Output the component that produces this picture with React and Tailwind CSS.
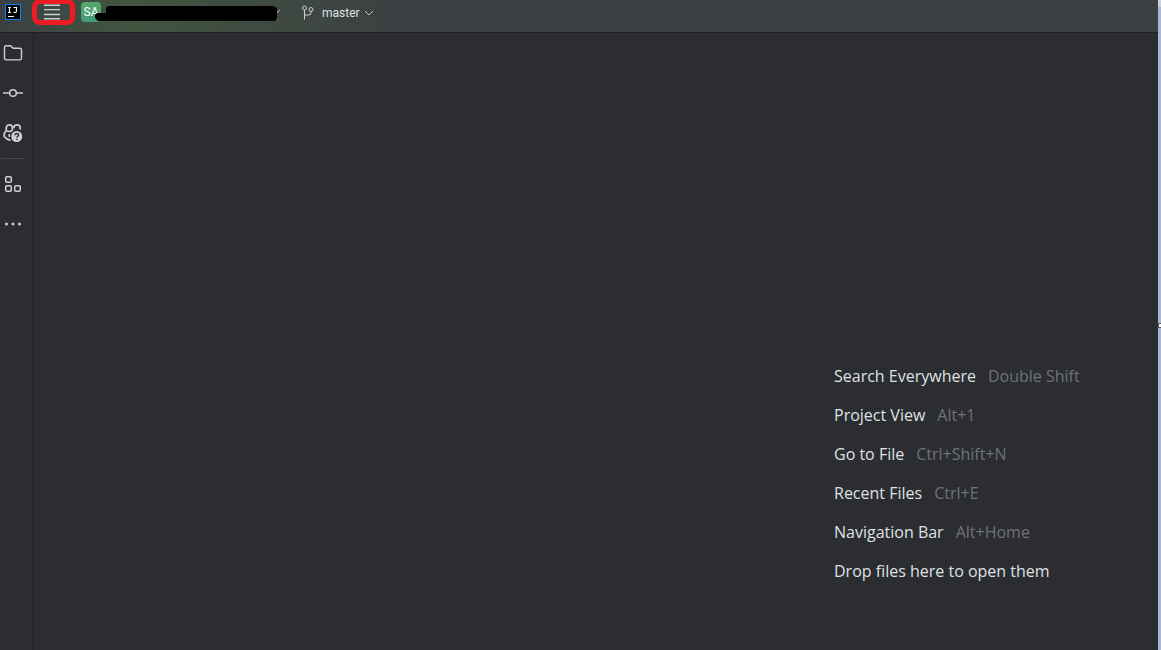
const hints = [
  { label: 'Search Everywhere', keys: 'Double Shift' },
  { label: 'Project View', keys: 'Alt+1' },
  { label: 'Go to File', keys: 'Ctrl+Shift+N' },
  { label: 'Recent Files', keys: 'Ctrl+E' },
  { label: 'Navigation Bar', keys: 'Alt+Home' },
  { label: 'Drop files here to open them' },
]

function Logo() {
  return (
    <svg width="16" height="16" viewBox="0 0 16 16" fill="none" aria-hidden="true">
      <rect x="0.5" y="0.5" width="15" height="15" fill="#000" stroke="#087cfa" />
      <path d="M3 3.5h3M4.5 3.5v5M3 8.5h3M8.5 3.5h3v3.5q0 1.5-1.5 1.5h-1.5" stroke="#fff" strokeWidth="1.2" />
      <path d="M3 12.5h6" stroke="#fff" />
    </svg>
  )
}

function MenuIcon() {
  return (
    <svg width="16" height="16" viewBox="0 0 16 16" stroke="#ced0d6" strokeWidth="1.4" aria-hidden="true">
      <path d="M0 1.3h16M0 5.6h16M0 10.5h16M0 14.8h16" />
    </svg>
  )
}

function BranchIcon() {
  return (
    <svg width="14" height="16" viewBox="0 0 14 16" fill="none" stroke="#ced0d6" aria-hidden="true">
      <circle cx="3.5" cy="3" r="2" />
      <circle cx="10" cy="4.5" r="2" />
      <path d="M3.5 5v9.5M10 6.5v1q0 2.5-2.5 2.5h-4" />
    </svg>
  )
}

function Chevron() {
  return (
    <svg width="10" height="6" viewBox="0 0 10 6" fill="none" stroke="#b4b8bf" aria-hidden="true">
      <path d="M1 1l4 4 4-4" />
    </svg>
  )
}

function FolderIcon() {
  return (
    <svg width="20" height="20" viewBox="0 0 20 20" fill="none" stroke="#ced0d6" strokeWidth="1.4" aria-hidden="true">
      <path d="M1.5 4.5a1.8 1.8 0 0 1 1.8-1.8h4.2l2.7 2.6h6.5a1.8 1.8 0 0 1 1.8 1.8v8a1.8 1.8 0 0 1-1.8 1.8h-13.4a1.8 1.8 0 0 1-1.8-1.8z" />
    </svg>
  )
}

function CommitIcon() {
  return (
    <svg width="20" height="20" viewBox="0 0 20 20" fill="none" stroke="#ced0d6" strokeWidth="1.5" aria-hidden="true">
      <circle cx="10" cy="10" r="3.3" />
      <path d="M0 10h6.7M13.3 10h6.7" />
    </svg>
  )
}

function CopilotIcon() {
  return (
    <svg width="20" height="20" viewBox="0 0 20 20" fill="none" stroke="#ced0d6" strokeWidth="1.7" aria-hidden="true">
      <path d="M3.3 7.5C2.8 3.5 4 1.9 6.3 1.9c2.400 0 3.200 1 3.200 3.100S8.500 8.500 6.300 8.500 3.300 7.500 3.300 7.500zM17.200 6.500C17.500 3.200 16.600 1.900 14.200 1.900c-2.400 0-3.400 1-3.400 3.300" />
      <path d="M3 8C1.700 8.900 1.200 9.900 1.200 11.500v2C2.800 15.600 4.800 16.900 7.600 17.300M6.300 11v3" />
      <circle cx="13.7" cy="13.5" r="6.6" fill="#2b2d30" stroke="none" />
      <circle cx="13.7" cy="13.5" r="5.5" fill="#ced0d6" stroke="none" />
      <path d="M12 12.2c0-2.300 3.600-2.200 3.600-.1 0 1.300-1.800 1.200-1.800 2.500M13.800 15.700v1.400" stroke="#2b2d30" strokeWidth="1.4" />
    </svg>
  )
}

function StructureIcon() {
  return (
    <svg width="20" height="20" viewBox="0 0 20 20" fill="none" stroke="#ced0d6" strokeWidth="1.5" aria-hidden="true">
      <rect x="2.7" y="2.7" width="5.6" height="5.6" rx="1.2" />
      <rect x="2.7" y="11.7" width="5.6" height="5.6" rx="1.2" />
      <rect x="11.7" y="11.7" width="5.6" height="5.6" rx="1.2" />
    </svg>
  )
}

function MoreIcon() {
  return (
    <svg width="20" height="20" viewBox="0 0 20 20" fill="#ced0d6" aria-hidden="true">
      <circle cx="3.5" cy="10" r="1.5" />
      <circle cx="10" cy="10" r="1.5" />
      <circle cx="16.5" cy="10" r="1.5" />
    </svg>
  )
}

function ToolButton({ label, children }) {
  return (
    <button type="button" aria-label={label} className="flex h-10 w-[26px] items-center justify-center">
      {children}
    </button>
  )
}

function Header() {
  return (
    <header className="flex h-[33px] items-start border-b border-[#1e1f22] bg-[linear-gradient(90deg,#3c4042_0px,#415540_130px,#3c4042_390px)]">
      <div className="flex h-6 items-center pl-[5px]">
        <Logo />
        <button
          type="button"
          aria-label="Main menu"
          className="ml-[11px] flex h-[26px] w-[43px] items-center justify-center rounded-lg border-[5px] border-[#ed1c24] pr-1"
        >
          <MenuIcon />
        </button>
        <button type="button" aria-label="Project" className="relative ml-[6px] flex h-6 w-[200px] items-center justify-between">
          <span className="flex size-5 items-center justify-center rounded bg-linear-to-b from-[#58a869] to-[#3f9b7c] font-['Roboto',sans-serif] text-xs text-white">
            SA
          </span>
          <Chevron />
          <svg className="absolute top-1.5 left-3.5" width="183" height="16" viewBox="0 0 183 16" aria-hidden="true">
            <path d="M13 0h165l4 2v10l-2 3H3l-3-3V9l2-2h9V2z" fill="#000" />
          </svg>
        </button>
        <button
          type="button"
          className="ml-5 flex h-6 items-center pt-0.5 font-['Roboto',sans-serif] text-xs text-[#dfe1e5]"
        >
          <BranchIcon />
          <span className="mr-1 ml-[7px]">master</span>
          <Chevron />
        </button>
      </div>
    </header>
  )
}

function Sidebar() {
  return (
    <nav className="flex w-[34px] shrink-0 flex-col items-start border-r border-[#1e1f22]">
      <ToolButton label="Project">
        <FolderIcon />
      </ToolButton>
      <ToolButton label="Commit">
        <CommitIcon />
      </ToolButton>
      <ToolButton label="Copilot">
        <CopilotIcon />
      </ToolButton>
      <div className="my-[5px] ml-px h-px w-6 bg-[#43454a]" />
      <ToolButton label="Structure">
        <StructureIcon />
      </ToolButton>
      <ToolButton label="More tool windows">
        <MoreIcon />
      </ToolButton>
    </nav>
  )
}

export default function App() {
  return (
    <div className="flex min-h-screen bg-[#2b2d30]">
      <div className="flex grow flex-col">
        <Header />
        <div className="flex grow">
          <Sidebar />
          <main className="flex grow items-end justify-end pr-[81px] pb-[60px]">
            <ul className="w-[243px] font-['Open_Sans',sans-serif] text-base whitespace-nowrap text-[#dfe1e5]">
              {hints.map((hint) => (
                <li key={hint.label} className="flex h-[39px] items-center gap-3">
                  <span>{hint.label}</span>
                  {hint.keys && <kbd className="font-['Open_Sans',sans-serif] text-base text-[#6f737a]">{hint.keys}</kbd>}
                </li>
              ))}
            </ul>
          </main>
        </div>
      </div>
      <div className="flex w-[3px] shrink-0 flex-col justify-between bg-[#a9b8d2]">
        <div className="h-[7px] bg-[#c8d3e8]" />
        <div className="h-[5px] border-y border-l border-[#55585e] bg-white" />
        <div className="h-[7px]" />
      </div>
    </div>
  )
}
